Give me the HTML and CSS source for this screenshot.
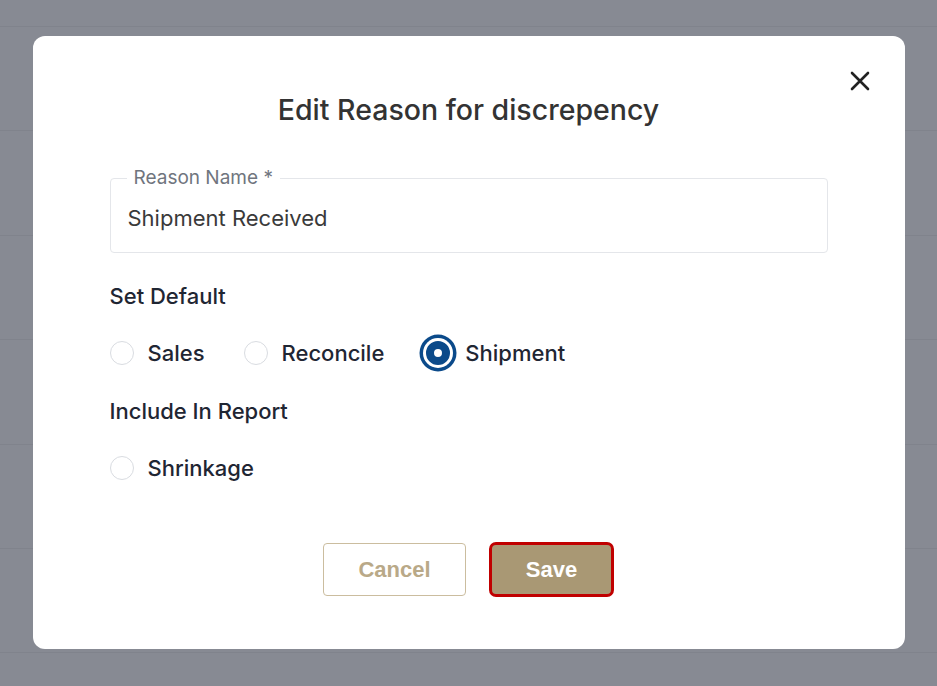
FILE: index.html
```html
<!DOCTYPE html>
<html lang="en">
<head>
    <meta charset="UTF-8">
    <meta name="viewport" content="width=device-width, initial-scale=1.0">
    <title>Edit Reason for discrepency</title>
    <link rel="stylesheet" href="styles.css">
</head>
<body>
    <div class="page">
        <div class="page-top"></div>
        <div class="page-row"></div>
        <div class="page-row"></div>
        <div class="page-row"></div>
        <div class="page-row"></div>
        <div class="page-row"></div>
        <div class="page-row"></div>
    </div>

    <div class="overlay">
        <div class="modal">
            <button class="close-btn" type="button" aria-label="Close">
                <svg width="20" height="20" viewBox="0 0 20 20">
                    <path d="M2 2 L18 18 M18 2 L2 18" stroke="#222" stroke-width="2.6" stroke-linecap="round"/>
                </svg>
            </button>
            <h2 class="modal-title">Edit Reason for discrepency</h2>

            <div class="field">
                <label class="field-label" for="reason">Reason Name *</label>
                <input class="field-input" type="text" id="reason" value="Shipment Received">
            </div>

            <div class="section-label">Set Default</div>
            <div class="radio-row">
                <label class="radio"><span class="radio-dot"></span>Sales</label>
                <label class="radio"><span class="radio-dot"></span>Reconcile</label>
                <label class="radio"><span class="radio-dot checked"></span>Shipment</label>
            </div>

            <div class="section-label">Include In Report</div>
            <div class="radio-row">
                <label class="radio"><span class="radio-dot"></span>Shrinkage</label>
            </div>

            <div class="actions">
                <button class="btn btn-cancel" type="button">Cancel</button>
                <button class="btn btn-save" type="button">Save</button>
            </div>
        </div>
    </div>
</body>
</html>
```

FILE: styles.css
```css
body {
    margin: 0;
    font-family: Inter, "Noto Sans", sans-serif;
    background-color: #878a93;
}
.page {
    height: 100vh;
    overflow: hidden;
}
.page-top {
    height: 26px;
    border-bottom: 1px solid #80838c;
}
.page-row {
    height: 103.4px;
    border-bottom: 1px solid #80838c;
}
.overlay {
    position: fixed;
    inset: 0;
    display: flex;
    justify-content: center;
    align-items: flex-start;
    padding-top: 36px;
}
.modal {
    position: relative;
    width: 872px;
    box-sizing: border-box;
    padding: 56px 77px 52px;
    background: #fff;
    border-radius: 12px;
    display: flex;
    flex-direction: column;
}
.close-btn {
    position: absolute;
    top: 35px;
    right: 35px;
    width: 20px;
    height: 20px;
    padding: 0;
    border: none;
    background: none;
    cursor: pointer;
}
.close-btn svg {
    display: block;
}
.modal-title {
    margin: 0;
    font-size: 28.5px;
    line-height: 36px;
    font-weight: 500;
    color: #333;
    text-align: center;
}
.field {
    position: relative;
    margin-top: 50px;
}
.field-label {
    position: absolute;
    top: -11px;
    left: 17px;
    padding: 0 7px;
    background: #fff;
    font-size: 19px;
    line-height: 22px;
    color: #70757e;
}
.field-input {
    display: block;
    width: 100%;
    height: 75px;
    box-sizing: border-box;
    padding: 4px 17px 0;
    border: 1px solid #e4e6ea;
    border-radius: 4px;
    font-family: inherit;
    font-size: 22px;
    color: #3a3a3a;
    outline: none;
}
.section-label {
    margin-top: 30px;
    font-size: 22px;
    line-height: 26px;
    font-weight: 500;
    color: #1f2633;
}
.radio-row {
    display: flex;
    gap: 39px;
    margin-top: 26px;
    height: 36px;
}
.radio-row + .section-label {
    margin-top: 27px;
}
.radio {
    display: flex;
    align-items: center;
    gap: 14px;
    font-size: 22px;
    font-weight: 500;
    color: #1f2633;
    cursor: pointer;
}
.radio-dot {
    width: 24px;
    height: 24px;
    box-sizing: border-box;
    border: 1.5px solid #d9dce1;
    border-radius: 50%;
    flex-shrink: 0;
}
.radio-dot.checked {
    border: 8px solid #0b4a8a;
    background: #fff;
    box-shadow: 0 0 0 3px #fff, 0 0 0 6.5px #0b4a8a;
    margin-left: 3px;
    margin-right: 1px;
}
.actions {
    display: flex;
    justify-content: center;
    align-items: center;
    gap: 23px;
    margin-top: 56px;
}
.btn {
    font-family: "Liberation Sans", Arial, sans-serif;
    font-size: 22px;
    font-weight: 700;
    border-radius: 4px;
    cursor: pointer;
    box-sizing: border-box;
}
.btn-cancel {
    width: 143px;
    height: 53px;
    background: #fff;
    border: 1.5px solid #cbbd9f;
    color: #b9a988;
}
.btn-save {
    width: 125px;
    height: 55px;
    background: #a99874;
    border: 3px solid #c00000;
    border-radius: 7px;
    color: #fff;
}
```
